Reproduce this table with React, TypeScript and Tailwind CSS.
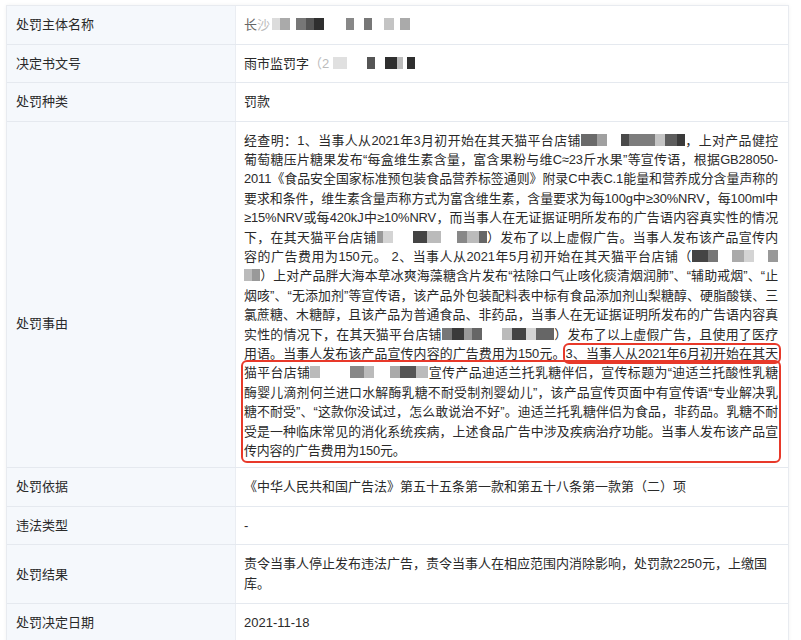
import type { ReactNode } from "react";

type Cell = [number, string];

// mosaic used to mask shop names / document numbers
function Mosaic({ cells, className = "" }: { cells: Cell[]; className?: string }) {
    return (
        <span className={`inline-flex h-[12px] align-[-1px] blur-[0.7px] ${className}`}>
            {cells.map(([w, c], i) => (
                <span key={i} className="h-full" style={{ width: w, backgroundColor: c }} />
            ))}
        </span>
    );
}

function Line({ children, last = false }: { children: ReactNode; last?: boolean }) {
    return (
        <div className={last ? "whitespace-nowrap" : "whitespace-nowrap text-justify [text-align-last:justify]"}>
            {children}
        </div>
    );
}

function Row({
    label,
    children,
    labelClass = "",
    valueClass = "",
}: {
    label: string;
    children: ReactNode;
    labelClass?: string;
    valueClass?: string;
}) {
    return (
        <div className="grid grid-cols-[229px_minmax(0,1fr)] border-b border-[#e5e9ef] last:border-b-0">
            <div className={`flex items-center bg-[#f5f8fc] border-r border-[#eaedf2] pl-[9px] ${labelClass}`}>
                {label}
            </div>
            <div className={`min-w-0 pl-[8px] pr-[10px] ${valueClass || "py-[9px] leading-[19.5px]"}`}>{children}</div>
        </div>
    );
}

const T = "transparent";

export default function App() {
    return (
        <div className="min-h-screen bg-white pt-[5px] pl-[6px]">
            <div className="w-[783px] border border-[#e8ebf0] bg-white text-[13px] text-[#2a2a2a] font-['Liberation_Sans','Noto_Sans_CJK_SC',sans-serif] shadow-[0_0_4px_rgba(0,0,0,0.05)]">
                <Row label="处罚主体名称">
                    <span className="text-[#666]">长</span>
                    <span className="text-[#bbb]">沙</span>
                    <Mosaic
                        className="ml-[2px]"
                        cells={[
                            [8, "#dcdcdc"], [10, "#aaa"], [6, T], [10, "#777"], [8, "#555"], [10, "#2f2f2f"],
                            [22, T], [8, "#888"], [10, T], [8, "#777"], [12, T], [10, "#c4c4c4"], [6, T], [10, "#aaa"],
                        ]}
                    />
                </Row>
                <Row label="决定书文号">
                    雨市监罚字<span className="text-[#bbb]">（2</span>
                    <Mosaic
                        className="ml-[4px]"
                        cells={[[14, "#e0e0e0"], [20, T], [8, "#555"], [10, T], [12, "#2f2f2f"], [6, "#bbb"], [4, T], [8, "#2f2f2f"]]}
                    />
                </Row>
                <Row label="处罚种类">罚款</Row>
                <Row
                    label="处罚事由"
                    labelClass="pt-[58px]"
                    valueClass="pt-[9px] pb-[7px] leading-[19.4px] text-[12.9px] tracking-[-0.12px]"
                >
                    <Line>
                        经查明：1、当事人从2021年3月初开始在其天猫平台店铺
                        <Mosaic cells={[[16, "#6a6a6a"], [10, "#a0a0a0"], [14, T], [8, "#4a4a4a"], [26, "#7d7d7d"], [10, "#c4c4c4"], [12, "#5d5d5d"], [8, "#3a3a3a"]]} />
                        ，上对产品健控
                    </Line>
                    <Line>葡萄糖压片糖果发布“每盒维生素含量，富含果粉与维C≈23斤水果”等宣传语，根据GB28050-</Line>
                    <Line>2011《食品安全国家标准预包装食品营养标签通则》附录C中表C.1能量和营养成分含量声称的</Line>
                    <Line>要求和条件，维生素含量声称方式为富含维生素，含量要求为每100g中≥30%NRV，每100ml中</Line>
                    <Line>≥15%NRV或每420kJ中≥10%NRV，而当事人在无证据证明所发布的广告语内容真实性的情况</Line>
                    <Line>
                        下，在其天猫平台店铺
                        <Mosaic cells={[[6, "#999"], [10, "#d4d4d4"], [20, T], [14, "#444"], [14, "#bbb"], [16, T], [10, "#888"], [12, "#bbb"], [8, "#666"]]} />
                        ）发布了以上虚假广告。当事人发布该产品宣传内
                    </Line>
                    <Line>
                        容的广告费用为150元。 2、当事人从2021年5月初开始在其天猫平台店铺（
                        <Mosaic cells={[[16, "#444"], [10, "#777"], [14, T], [12, "#aaa"], [10, "#d4d4d4"], [14, T], [10, "#999"]]} />
                    </Line>
                    <Line>
                        <Mosaic cells={[[8, "#bbb"], [8, "#999"]]} />
                        ）上对产品胖大海本草冰爽海藻糖含片发布“祛除口气止咳化痰清烟润肺”、“辅助戒烟”、“止
                    </Line>
                    <Line>烟咳”、“无添加剂”等宣传语，该产品外包装配料表中标有食品添加剂山梨糖醇、硬脂酸镁、三</Line>
                    <Line>氯蔗糖、木糖醇，且该产品为普通食品、非药品，当事人在无证据证明所发布的广告语内容真</Line>
                    <Line>
                        实性的情况下，在其天猫平台店铺
                        <Mosaic cells={[[10, "#777"], [12, "#3a3a3a"], [8, "#999"], [10, "#666"], [20, T], [10, "#bbb"], [14, "#444"], [10, "#d4d4d4"], [18, "#666"]]} />
                        ）发布了以上虚假广告，且使用了医疗
                    </Line>
                    <Line>
                        用语。当事人发布该产品宣传内容的广告费用为150元。
                        <span className="rounded-[3px] outline-2 outline-offset-[1px] outline-[#e8392a]">
                            3、当事人从2021年6月初开始在其天
                        </span>
                    </Line>
                    <div className="rounded-[3px] outline-2 outline-offset-[1px] outline-[#e8392a]">
                        <Line>
                            猫平台店铺
                            <Mosaic cells={[[10, "#bbb"], [30, T], [14, "#888"], [10, "#bbb"], [16, T], [10, "#aaa"], [16, "#555"], [12, "#bbb"]]} />
                            宣传产品迪适兰托乳糖伴侣，宣传标题为“迪适兰托酸性乳糖
                        </Line>
                        <Line>酶婴儿滴剂何兰进口水解酶乳糖不耐受制剂婴幼儿”，该产品宣传页面中有宣传语“专业解决乳</Line>
                        <Line>糖不耐受”、“这款你没试过，怎么敢说治不好”。迪适兰托乳糖伴侣为食品，非药品。乳糖不耐</Line>
                        <Line>受是一种临床常见的消化系统疾病，上述食品广告中涉及疾病治疗功能。当事人发布该产品宣</Line>
                        <Line last>传内容的广告费用为150元。</Line>
                    </div>
                </Row>
                <Row label="处罚依据">《中华人民共和国广告法》第五十五条第一款和第五十八条第一款第（二）项</Row>
                <Row label="违法类型">-</Row>
                <Row label="处罚结果" valueClass="py-[9px] leading-[20px]">
                    责令当事人停止发布违法广告，责令当事人在相应范围内消除影响，处罚款2250元，上缴国库。
                </Row>
                <Row label="处罚决定日期">2021-11-18</Row>
            </div>
        </div>
    );
}
